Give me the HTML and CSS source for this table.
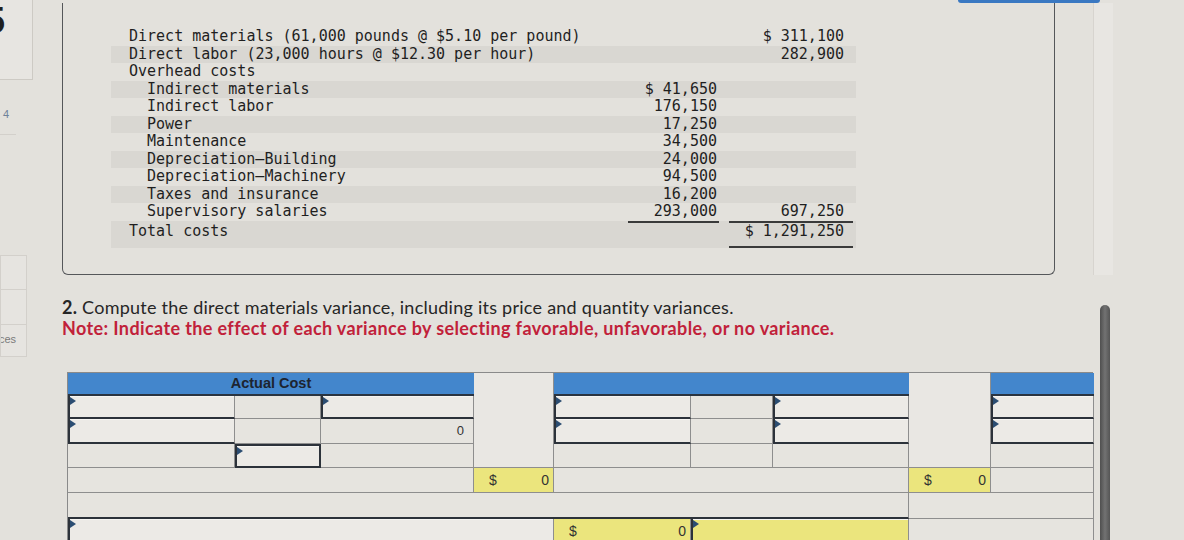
FILE: index.html
```html
<!DOCTYPE html>
<html>
<head>
<meta charset="utf-8">
<link rel="stylesheet" href="styles.css">
</head>
<body>
<div class="page">
  <aside class="sidebar">
    <div class="side-top"><span class="big-digit">5</span></div>
    <div class="side-num">4</div>
    <div class="side-box"></div>
    <div class="side-box"></div>
    <div class="side-box last"><span>ces</span></div>
  </aside>
  <main class="main">
    <div class="top-strip"><div class="top-btn"></div></div>
    <div class="upper">
      <section class="panel">
        <div class="cost-table">
          <div class="row"><span class="lbl">Direct materials (61,000 pounds @ $5.10 per pound)</span><span class="n1"></span><span class="n2">$ 311,100</span></div>
          <div class="row alt"><span class="lbl">Direct labor (23,000 hours @ $12.30 per hour)</span><span class="n1"></span><span class="n2">282,900</span></div>
          <div class="row"><span class="lbl">Overhead costs</span><span class="n1"></span><span class="n2"></span></div>
          <div class="row alt"><span class="lbl ind">Indirect materials</span><span class="n1">$ 41,650</span><span class="n2"></span></div>
          <div class="row"><span class="lbl ind">Indirect labor</span><span class="n1">176,150</span><span class="n2"></span></div>
          <div class="row alt"><span class="lbl ind">Power</span><span class="n1">17,250</span><span class="n2"></span></div>
          <div class="row"><span class="lbl ind">Maintenance</span><span class="n1">34,500</span><span class="n2"></span></div>
          <div class="row alt"><span class="lbl ind">Depreciation—Building</span><span class="n1">24,000</span><span class="n2"></span></div>
          <div class="row"><span class="lbl ind">Depreciation—Machinery</span><span class="n1">94,500</span><span class="n2"></span></div>
          <div class="row alt"><span class="lbl ind">Taxes and insurance</span><span class="n1">16,200</span><span class="n2"></span></div>
          <div class="row"><span class="lbl ind">Supervisory salaries</span><span class="n1 ul">293,000</span><span class="n2 ul">697,250</span></div>
          <div class="row alt total"><span class="lbl">Total costs</span><span class="n1"></span><span class="n2 ul">$ 1,291,250</span></div>
        </div>
      </section>
      <div class="side-band"></div>
    </div>
    <div class="lower">
      <div class="lower-content">
        <p class="q"><b>2.</b> Compute the direct materials variance, including its price and quantity variances.</p>
        <p class="note">Note: Indicate the effect of each variance by selecting favorable, unfavorable, or no variance.</p>
        <div class="var-grid">
          <div class="c head" style="grid-column:1/4;grid-row:1">Actual Cost</div>
          <div class="c gapcol" style="grid-column:4;grid-row:1/5"></div>
          <div class="c head" style="grid-column:5/8;grid-row:1"></div>
          <div class="c gapcol" style="grid-column:8;grid-row:1/5"></div>
          <div class="c head" style="grid-column:9;grid-row:1"></div>

          <div class="c inp" style="grid-column:1;grid-row:2"></div>
          <div class="c" style="grid-column:2;grid-row:2"></div>
          <div class="c inp" style="grid-column:3;grid-row:2"></div>
          <div class="c inp" style="grid-column:5;grid-row:2"></div>
          <div class="c" style="grid-column:6;grid-row:2"></div>
          <div class="c inp" style="grid-column:7;grid-row:2"></div>
          <div class="c inp" style="grid-column:9;grid-row:2"></div>

          <div class="c inp" style="grid-column:1;grid-row:3"></div>
          <div class="c" style="grid-column:2;grid-row:3"></div>
          <div class="c num" style="grid-column:3;grid-row:3">0</div>
          <div class="c inp" style="grid-column:5;grid-row:3"></div>
          <div class="c" style="grid-column:6;grid-row:3"></div>
          <div class="c inp" style="grid-column:7;grid-row:3"></div>
          <div class="c inp" style="grid-column:9;grid-row:3"></div>

          <div class="c" style="grid-column:1;grid-row:4"></div>
          <div class="c inp box" style="grid-column:2;grid-row:4"></div>
          <div class="c" style="grid-column:3;grid-row:4"></div>
          <div class="c" style="grid-column:5;grid-row:4"></div>
          <div class="c" style="grid-column:6;grid-row:4"></div>
          <div class="c" style="grid-column:7;grid-row:4"></div>
          <div class="c" style="grid-column:9;grid-row:4"></div>

          <div class="c" style="grid-column:1/4;grid-row:5"></div>
          <div class="c yel" style="grid-column:4;grid-row:5"><span>$</span><span>0</span></div>
          <div class="c" style="grid-column:5/8;grid-row:5"></div>
          <div class="c yel" style="grid-column:8;grid-row:5"><span>$</span><span>0</span></div>
          <div class="c" style="grid-column:9;grid-row:5"></div>

          <div class="c dark-bottom" style="grid-column:1/8;grid-row:6"></div>
          <div class="c" style="grid-column:8/10;grid-row:6"></div>

          <div class="c inp" style="grid-column:1/5;grid-row:7"></div>
          <div class="c yel" style="grid-column:5;grid-row:7"><span>$</span><span>0</span></div>
          <div class="c inp yelinp" style="grid-column:6/8;grid-row:7"></div>
          <div class="c" style="grid-column:8/10;grid-row:7"></div>
        </div>
      </div>
      <div class="scrollbar"></div>
    </div>
  </main>
</div>
</body>
</html>
```
FILE: styles.css
```css
* { box-sizing: border-box; }
html, body { margin: 0; padding: 0; }
body {
  width: 1184px;
  height: 540px;
  overflow: hidden;
  background: #e3e1dc;
  font-family: "Liberation Sans", Arial, sans-serif;
  color: #2b2b2b;
}
.page { display: flex; height: 540px; }

/* sidebar */
.sidebar {
  width: 33px;
  flex: none;
  display: flex;
  flex-direction: column;
  overflow: hidden;
}
.side-top {
  height: 80px;
  flex: none;
  border-right: 1px solid #cdcac4;
  border-bottom: 1px solid #cdcac4;
  background: #e7e5e1;
  overflow: hidden;
}
.big-digit {
  display: block;
  font: 700 36px/1 "Liberation Sans", Arial, sans-serif;
  margin-left: -15px;
  margin-top: 3px;
  color: #1f1f1f;
}
.side-num {
  margin-top: 27px;
  width: 16px;
  height: 28px;
  padding-left: 3px;
  font-size: 11px;
  line-height: 14px;
  color: #6f8299;
  border-bottom: 1px solid #d3d0cb;
}
.side-box {
  width: 27px;
  height: 35px;
  border: 1px solid #d3d0cb;
  border-top: none;
  background: #e6e4e0;
}
.side-num + .side-box { margin-top: 120px; border-top: 1px solid #d3d0cb; }
.side-box.last {
  height: 32px;
  font-size: 11px;
  color: #7a7a7a;
  padding-top: 8px;
  overflow: hidden;
  white-space: nowrap;
}
.side-box.last span { display: block; margin-left: -2px; }

/* main */
.main {
  margin-left: 29px;
  width: 1122px;
  display: flex;
  flex-direction: column;
}
.top-strip { height: 3px; flex: none; }
.top-btn {
  margin-left: 896px;
  width: 142px;
  height: 3px;
  background: #3a78c2;
  border-radius: 0 0 3px 3px;
}
.upper { display: flex; flex: none; }
.panel {
  width: 993px;
  height: 272px;
  border: 1px solid #55575a;
  border-top: none;
  border-radius: 0 0 6px 6px;
  padding: 25px 0 0 48px;
}
.side-band {
  margin-left: 38px;
  width: 20px;
  background: #e8e6e2;
  border-left: 1px solid #d7d4cf;
}

.cost-table {
  width: 745px;
  font-family: "DejaVu Sans Mono", "Liberation Mono", monospace;
  font-size: 15px;
  color: #1f1f1f;
}
.row {
  display: grid;
  grid-template-columns: 517px 91px 10px 124px;
  height: 17.5px;
  line-height: 17.5px;
  white-space: nowrap;
}
.row.alt { background: #d9d7d2; }
.row.total { height: 27px; line-height: 20px; }
.lbl { padding-left: 18px; }
.lbl.ind { padding-left: 36px; }
.n1 { text-align: right; padding-right: 2px; }
.n2 { grid-column: 4; text-align: right; padding-right: 9px; }
.ul { border-bottom: 2px solid #3a3a3a; }

/* lower */
.lower { display: flex; flex: 1; }
.lower-content { width: 1038px; flex: none; }
.q {
  margin: 22px 0 0 0;
  font-family: Lato, "Open Sans", sans-serif;
  font-size: 18px;
  line-height: 21px;
  color: #262626;
  letter-spacing: 0.25px;
}
.q b { font-weight: 700; }
.note {
  margin: 0;
  font-family: Lato, "Open Sans", sans-serif;
  font-size: 18px;
  font-weight: 700;
  line-height: 21px;
  color: #c1213a;
  letter-spacing: 0.38px;
}
.scrollbar {
  margin-top: 30px;
  width: 10px;
  flex: none;
  background: linear-gradient(90deg, #4f4f4f, #727272 50%, #555);
  border-radius: 5px 5px 0 0;
}

.var-grid {
  margin: 33px 0 0 5px;
  width: 1026px;
  display: grid;
  grid-template-columns: 167px 86px 153px 80px 137px 82px 136px 82px 103px;
  grid-template-rows: 23px 23px 25px 24px 25px 26px 24px;
  border-left: 1px solid #8a8a8a;
  border-top: 1px solid #8a8a8a;
  font-size: 13px;
}
.c {
  position: relative;
  background: #e6e4df;
  border-right: 1px solid #8e8e8e;
  border-bottom: 1px solid #8e8e8e;
}
.c.head {
  background: #4386cc;
  border-bottom: 2px solid #2a3440;
  border-right: none;
  font-weight: 700;
  color: #1d2430;
  text-align: center;
  line-height: 21px;
  font-size: 14.5px;
}
.c.gapcol { background: #e9e7e3; }
.c.num { text-align: right; padding-right: 9px; line-height: 24px; color: #333; }
.c.dark-bottom { border-bottom: 2px solid #2c323a; }
.c.inp {
  background: #eceae6;
  border-left: 2px solid #2c323a;
  border-bottom: 2px solid #2c323a;
  box-shadow: inset 0 1px 0 #f6f5f2;
}
.c.inp::before {
  content: "";
  position: absolute;
  left: 0;
  top: 1px;
  border-left: 6px solid #2b4d72;
  border-top: 4px solid transparent;
  border-bottom: 4px solid transparent;
}
.c.box { border-top: 2px solid #2c323a; border-right: 2px solid #2c323a; }
.c.yel {
  background: #ebe57d;
  display: flex;
  justify-content: space-between;
  align-items: center;
  padding: 0 4px 0 15px;
  color: #333;
  font-size: 14px;
}
.c.yelinp { background: #ebe57d; border-bottom: none; }
```
